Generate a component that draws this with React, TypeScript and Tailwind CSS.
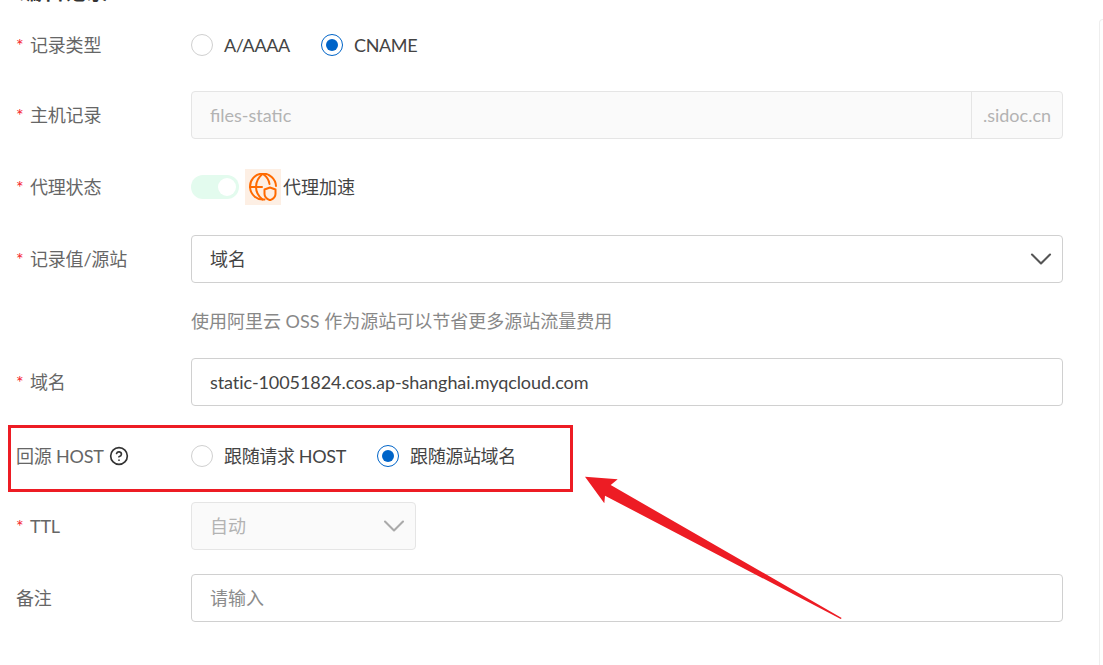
import React from "react";
import { ChevronDown, HelpCircle } from "lucide-react";

const FONT = "font-['Lato','Noto_Sans_CJK_SC',sans-serif]";

const Label: React.FC<{ text: string; required?: boolean; children?: React.ReactNode }> = ({
  text,
  required = true,
  children
}) => (
  <div className="w-[175px] shrink-0 flex items-center text-lg text-[#666666]">
    {required && <span className="w-[14px] text-[#f5222d]">*</span>}
    <span className="tracking-[-0.2px]">{text}</span>
    {children}
  </div>
);

const Radio: React.FC<{ label: string; checked?: boolean; className?: string }> = ({
  label,
  checked = false,
  className = ""
}) => (
  <label className={`flex items-center text-lg text-[#444444] ${className}`}>
    <span
      className={`w-[22px] h-[22px] rounded-full border flex items-center justify-center bg-white ${
        checked ? "border-[#0064c8]" : "border-[#d0d0d0]"
      }`}
    >
      {checked && <span className="w-3 h-3 rounded-full bg-[#0064c8]" />}
    </span>
    <span className="ml-[11px] tracking-[-0.35px]">{label}</span>
  </label>
);

const GlobeShield = () => (
  <svg viewBox="0 0 28 28" className="w-[28px] h-[28px]" fill="none" stroke="#ff6a00" strokeWidth="2" strokeLinecap="round" strokeLinejoin="round">
    <path d="M15.500 26.500A13 13 0 1 1 27 13" />
    <path d="M13.500 1C8.500 5 7 9.500 7 14s1.500 8.500 6.500 12.500" />
    <path d="M14 1c3.500 2.500 6 6 6.500 10" />
    <path d="M1 14h12" />
    <path d="M21 14.500l5.500 2v4.500c0 3-2.300 5-5.500 6.200-3.200-1.200-5.500-3.200-5.500-6.200v-4.500z" />
  </svg>
);

export default function App() {
  return (
    <div className={`relative w-[1103px] h-[665px] overflow-hidden bg-white flex ${FONT}`}>
      <main className="w-[1099px] shrink-0 pl-4 pr-9">
        <div className="h-[21px] flex items-end">
          <div className="ml-1 pb-[14px] text-[22px] font-bold text-[#333333]">编辑记录</div>
        </div>

        <div className="flex items-center h-12 mb-[22px]">
          <Label text="记录类型" />
          <Radio label="A/AAAA" />
          <Radio label="CNAME" checked className="ml-[31px]" />
        </div>

        <div className="flex items-center h-12 mb-6">
          <Label text="主机记录" />
          <div className="flex-1 h-12 flex rounded border border-[#e5e5e5] bg-[#fafafa] text-lg text-[#b3b3b3]">
            <div className="flex-1 flex items-center pl-[18px]">files-static</div>
            <div className="w-[91px] flex items-center justify-center border-l border-[#e5e5e5]">.sidoc.cn</div>
          </div>
        </div>

        <div className="flex items-center h-12 mb-6">
          <Label text="代理状态" />
          <div className="w-12 h-6 rounded-full bg-[#e3fbee] flex items-center justify-end pr-[3px]">
            <span className="w-[18px] h-[18px] rounded-full bg-white" />
          </div>
          <div className="ml-1.5 w-9 h-9 bg-[#fdefe4] flex items-center justify-center">
            <GlobeShield />
          </div>
          <span className="ml-0.5 text-lg text-[#444444]">代理加速</span>
        </div>

        <div className="flex items-center h-12">
          <Label text="记录值/源站" />
          <div className="flex-1 h-12 flex items-center justify-between rounded border border-[#d0d0d0] pl-[18px] pr-[3px] text-lg text-[#444444]">
            <span>域名</span>
            <ChevronDown className="w-9 h-9 text-[#555555]" strokeWidth={1.4} />
          </div>
        </div>

        <div className="h-[75px] flex items-center pl-[175px] text-lg text-[#888888]">
          使用阿里云 OSS 作为源站可以节省更多源站流量费用
        </div>

        <div className="flex items-center h-12 mb-[26px]">
          <Label text="域名" />
          <div className="flex-1 h-12 flex items-center rounded border border-[#d0d0d0] pl-[18px] text-lg text-[#444444] tracking-[-0.07px]">
            static-10051824.cos.ap-shanghai.myqcloud.com
          </div>
        </div>

        <div className="flex items-center h-12 mb-[22px]">
          <Label text="回源 HOST" required={false}>
            <HelpCircle className="ml-[5px] w-5 h-5 text-[#333333]" strokeWidth={2} />
          </Label>
          <Radio label="跟随请求 HOST" />
          <Radio label="跟随源站域名" checked className="ml-[31px]" />
        </div>

        <div className="flex items-center h-12 mb-6">
          <Label text="TTL" />
          <div className="w-[225px] h-12 flex items-center justify-between rounded border border-[#e5e5e5] bg-[#fafafa] pl-[18px] pr-[3px] text-lg text-[#b3b3b3]">
            <span>自动</span>
            <ChevronDown className="w-9 h-9 text-[#aaaaaa]" strokeWidth={1.4} />
          </div>
        </div>

        <div className="flex items-center h-12">
          <Label text="备注" required={false} />
          <div className="flex-1 h-12 flex items-center rounded border border-[#d0d0d0] pl-[18px] text-lg text-[#8c8c8c]">
            请输入
          </div>
        </div>
      </main>

      <aside className="flex-1 mt-[19px] border-l border-t border-[#eeeeee] rounded-tl-md bg-[#fefefe]" />

      {/* screenshot annotation: red box and arrow */}
      <div className="absolute left-2 top-[425px] w-[565px] h-[67px] border-[3px] border-[#ed1c24]" />
      <svg className="absolute left-0 top-0 pointer-events-none" width="1103" height="665">
        <polygon
          points="585,476.700 617.700,479.300 610.700,485 841.700,618 840.700,619 605,495.700 604.300,503.300"
          fill="#ed1c24"
        />
      </svg>
    </div>
  );
}
